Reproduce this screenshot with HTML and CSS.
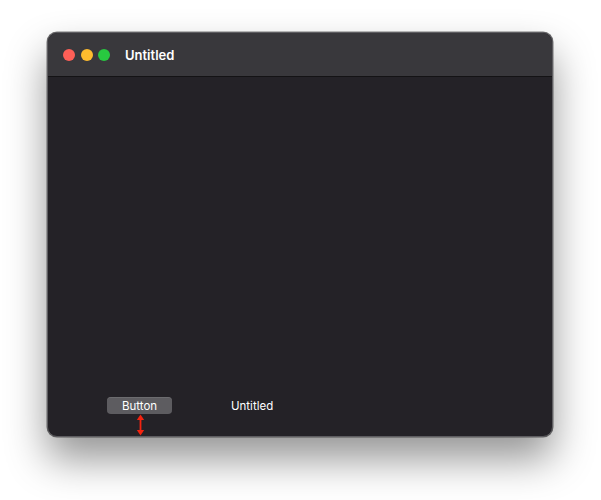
FILE: index.html
```html
<!DOCTYPE html>
<html lang="en">
<head>
    <meta charset="UTF-8">
    <title>Untitled</title>
    <link rel="stylesheet" href="styles.css">
</head>
<body>
    <div class="window">
        <div class="title-bar">
            <div class="lights">
                <span class="light close"></span>
                <span class="light minimize"></span>
                <span class="light zoom"></span>
            </div>
            <span class="title">Untitled</span>
        </div>
        <div class="content">
            <div class="bottom-row">
                <div class="button-col">
                    <button class="mac-button">Button</button>
                    <svg class="spacer-arrow" width="9" height="22" viewBox="0 0 9 22">
                        <line x1="4.5" y1="4" x2="4.5" y2="18" stroke="#f4230f" stroke-width="1.8"/>
                        <polygon points="4.5,0.5 8.2,6 0.8,6" fill="#f4230f"/>
                        <polygon points="4.5,21.5 8.2,16 0.8,16" fill="#f4230f"/>
                    </svg>
                </div>
                <span class="label">Untitled</span>
            </div>
        </div>
    </div>
</body>
</html>
```

FILE: styles.css
```css
html {
    background-color: #ffffff;
}

body {
    margin: 0;
    padding: 32px 48px 0 47px;
    min-height: 500px;
    box-sizing: border-box;
    font-family: "Inter", "Liberation Sans", sans-serif;
}

.window {
    width: 506px;
    height: 405px;
    box-sizing: border-box;
    display: flex;
    flex-direction: column;
    background-color: #242227;
    border: 1px solid #5e5d61;
    border-radius: 10px;
    overflow: hidden;
    box-shadow: 0 22px 40px rgba(0, 0, 0, 0.42), 0 0 0 0.5px rgba(0, 0, 0, 0.5);
}

.title-bar {
    height: 43px;
    flex-shrink: 0;
    display: flex;
    align-items: center;
    padding-left: 15px;
    background-color: #39383c;
    border-bottom: 1px solid #141315;
}

.lights {
    display: flex;
    gap: 5.5px;
}

.light {
    width: 12px;
    height: 12px;
    border-radius: 50%;
}

.close { background-color: #fe5f57; }
.minimize { background-color: #febc2e; }
.zoom { background-color: #28c840; }

.title {
    margin-left: 15px;
    color: #ffffff;
    font-size: 13px;
    font-weight: 600;
}

.content {
    flex: 1;
    display: flex;
    flex-direction: column;
    justify-content: flex-end;
    padding-left: 59px;
}

.bottom-row {
    display: flex;
    align-items: flex-start;
    gap: 59px;
}

.button-col {
    display: flex;
    flex-direction: column;
    align-items: center;
    width: 65px;
}

.mac-button {
    width: 65px;
    height: 17px;
    padding: 0;
    background-color: #5d5c60;
    border: none;
    border-radius: 4px;
    box-shadow: inset 0 0.5px 0 rgba(255, 255, 255, 0.2);
    color: #ffffff;
    font-family: inherit;
    font-size: 11.5px;
}

.spacer-arrow {
    display: block;
    margin-left: 2px;
}

.label {
    color: #ffffff;
    font-size: 11.5px;
    line-height: 17px;
    padding-top: 1px;
}
```
